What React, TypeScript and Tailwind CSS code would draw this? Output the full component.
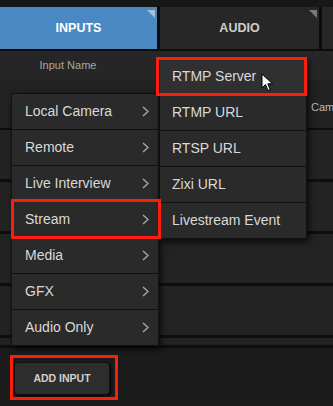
import React from "react";

const mainItems = ["Local Camera", "Remote", "Live Interview", "Stream", "Media", "GFX", "Audio Only"];
const subItems = ["RTMP Server", "RTMP URL", "RTSP URL", "Zixi URL", "Livestream Event"];

function Chevron() {
  return (
    <svg width="7" height="11" viewBox="0 0 7 11" className="shrink-0">
      <polyline points="1,1 6,5.5 1,10" fill="none" stroke="#a8a8a8" strokeWidth="1.4" />
    </svg>
  );
}

function Corner({ color }: { color: string }) {
  return (
    <svg width="8" height="8" viewBox="0 0 8 8" className="absolute right-[2px] top-[3px]">
      <polygon points="0,0 8,0 8,8" fill={color} />
    </svg>
  );
}

export default function App() {
  return (
    <div
      className="relative w-[333px] h-[406px] overflow-hidden bg-[#141414] flex flex-col"
      style={{ fontFamily: '"Liberation Sans", Arial, sans-serif' }}
    >
      {/* top strip */}
      <div className="h-[7px] bg-[#171717]" />
      {/* tabs */}
      <div className="h-[44px] flex gap-[3px] bg-[#0c0c0c] border-b-[2px] border-[#0c0c0c]">
        <div className="relative w-[157px] bg-[#4a88c3] flex items-center justify-center text-white font-bold text-[12.5px]">
          INPUTS
          <Corner color="#a9bfd4" />
        </div>
        <div className="relative w-[159px] bg-[#272727] flex items-center justify-center text-[#cfcfcf] font-bold text-[12.5px]">
          AUDIO
          <Corner color="#7a7a7a" />
        </div>
        <div className="flex-1 bg-[#272727]" />
      </div>
      {/* header */}
      <div className="h-[29px] bg-[#262626] flex items-center">
        <div className="w-[136px] text-center text-[11px] text-[#a8a8a8]">Input Name</div>
      </div>
      {/* rows */}
      <div className="flex flex-col bg-[#0e0e0e]">
        <div className="h-[50px] bg-[#222222] border-b-[2px] border-[#0e0e0e] flex items-start justify-end">
          <span className="mt-[19px] text-[11px] text-[#bdbdbd] w-[22px] whitespace-nowrap">Cam</span>
        </div>
        <div className="h-[52px] bg-[#232323] border-b-[3px] border-[#0e0e0e]" />
        <div className="h-[52px] bg-[#232323] border-b-[3px] border-[#0e0e0e]" />
        <div className="h-[52px] bg-[#232323] border-b-[3px] border-[#0e0e0e]" />
        <div className="h-[52px] bg-[#232323] border-b-[3px] border-[#0e0e0e]" />
        <div className="h-[10px] bg-[#232323] border-b-[3px] border-[#0e0e0e]" />
      </div>
      {/* bottom bar */}
      <div className="flex-1 bg-[#1b1b1b] flex items-start pl-[14px] pt-[14px]">
        <div className="w-[96px] h-[33px] rounded-[4px] bg-[#2d2d2d] border border-[#111] shadow-[1px_1px_2px_#000] flex items-center justify-center text-[10.5px] font-bold text-[#cfcfcf]">
          ADD INPUT
        </div>
      </div>

      {/* main menu */}
      <div className="absolute left-[11px] top-[93px] w-[148px] bg-[#111] border border-[#111] shadow-[2px_3px_6px_rgba(0,0,0,0.7)] flex flex-col gap-[1px]">
        {mainItems.map((t) => (
          <div key={t} className="h-[35px] bg-[#2a2a2a] flex items-center justify-between pl-[13px] pr-[9px] text-[14px] text-[#d9d9d9]">
            <span>{t}</span>
            <Chevron />
          </div>
        ))}
      </div>

      {/* sub menu */}
      <div className="absolute left-[159px] top-[58px] w-[148px] bg-[#111] border border-[#111] shadow-[2px_3px_6px_rgba(0,0,0,0.7)] flex flex-col gap-[1px]">
        {subItems.map((t, i) => (
          <div key={t} className={`h-[35px] flex items-center pl-[12px] text-[14px] text-[#d9d9d9] ${i === 0 ? "bg-[#303030]" : "bg-[#2a2a2a]"}`}>
            {t}
          </div>
        ))}
      </div>

      {/* cursor */}
      <svg width="13" height="19" viewBox="0 0 13 19" className="absolute left-[261px] top-[73px]">
        <path d="M1,1 L1,15 L4.5,11.5 L7,17.5 L9.2,16.6 L6.8,10.8 L11.5,10.8 Z" fill="#fff" stroke="#000" strokeWidth="1" strokeLinejoin="round" />
      </svg>

      {/* red highlight boxes */}
      <div className="absolute left-[156px] top-[57px] w-[151px] h-[39px] border-[3px] border-[#fa1f0c]" />
      <div className="absolute left-[11px] top-[199px] w-[150px] h-[40px] border-[3px] border-[#fa1f0c]" />
      <div className="absolute left-[10px] top-[355px] w-[108px] h-[45px] border-[3px] border-[#fa1f0c]" />
    </div>
  );
}
